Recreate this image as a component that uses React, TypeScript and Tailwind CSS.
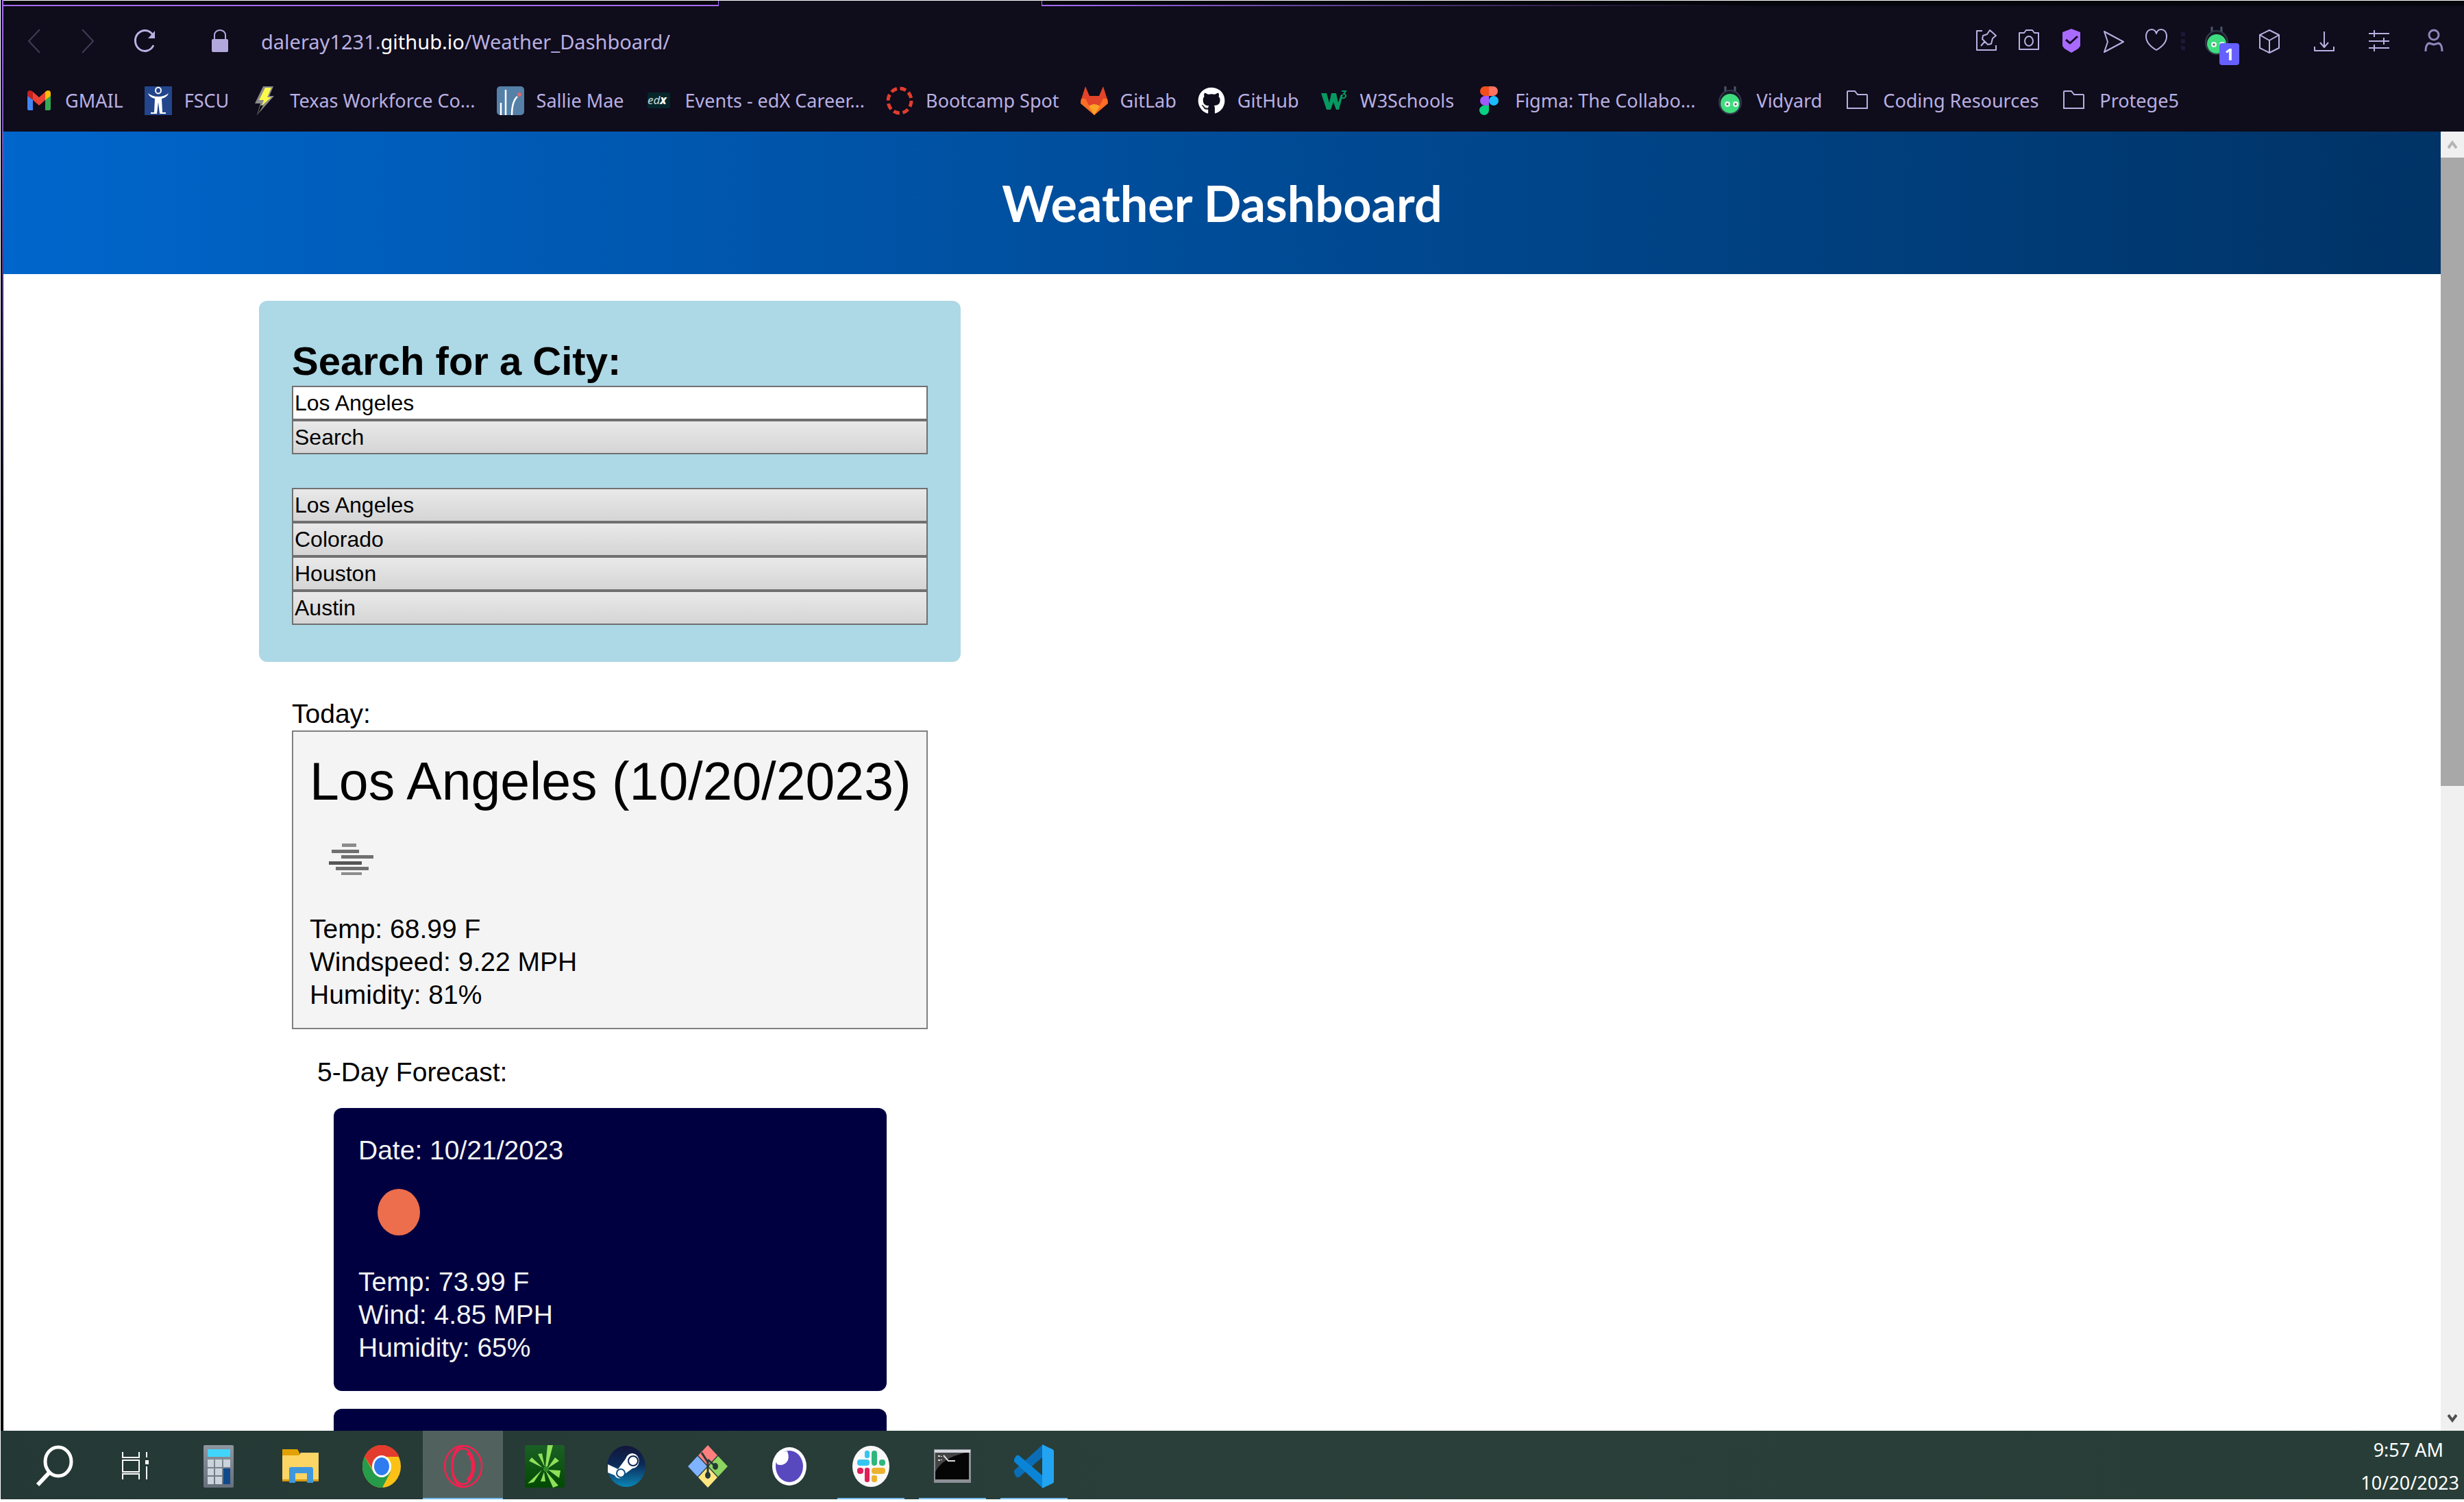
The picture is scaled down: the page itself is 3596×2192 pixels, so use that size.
import type { ReactNode } from "react";
import { FaGithub } from "react-icons/fa";

const UI_FONT = "font-['Noto_Sans','Open_Sans',sans-serif]";

/* ---------- toolbar icons ---------- */

function Line({ children }: { children: ReactNode }) {
  return (
    <svg viewBox="0 0 32 36" className="h-9 w-8 shrink-0" fill="none" stroke="#b9b0e2" strokeWidth="2" strokeLinejoin="round" aria-hidden="true">
      {children}
    </svg>
  );
}

const EditPin = () => (
  <Line>
    <path d="M10 3H2v28h28v-7" />
    <path d="M21 2l9 8-5 4 -2 8-5 1-8-8 1-5 6-2z M14 18l-6 7" />
  </Line>
);
const Camera = () => (
  <Line>
    <path d="M2 6h7l3-4h9l3 4h6v24H2z" />
    <ellipse cx="16" cy="18" rx="6" ry="7" />
  </Line>
);
const Shield = () => (
  <Line>
    <path d="M16 0l13 5v20l-3 4-10 6-10-6-3-4V5z" fill="#a96bff" stroke="none" />
    <path d="M8 16l6 5L25 11" stroke="#120b26" strokeWidth="3" />
  </Line>
);
const Send = () => (
  <Line>
    <path d="M2 4l28 15L2 34l5-15z" />
  </Line>
);
const Heart = () => (
  <Line>
    <path d="M16 31C9 27 1 20 1 11 1 4 5 1 9 1c4 0 6 2 7 6 1-4 3-6 7-6 4 0 8 3 8 10 0 9-8 16-15 20z" />
  </Line>
);
const Cube = () => (
  <Line>
    <path d="M16 2l14 7v19l-14 7-14-7V9z M2 9l14 8 14-8 M16 17v18" />
  </Line>
);
const Download = () => (
  <Line>
    <path d="M16 4v22 M10 20l6 7 6-7 M2 26v6h28v-6" />
  </Line>
);
const Sliders = () => (
  <Line>
    <path d="M1 7h30 M9 2v10 M1 18h30 M23 13v10 M1 28h30 M9 23v10" />
  </Line>
);
const Person = () => (
  <Line>
    <ellipse cx="16" cy="9" rx="7" ry="7" strokeWidth="3" stroke="#8f87ba" />
    <path d="M4 33c0-8 2-11 5-12l7 2 7-2c3 1 5 4 5 12" strokeWidth="3" stroke="#8f87ba" />
  </Line>
);
const Back = () => (
  <svg viewBox="0 0 20 36" className="h-9 w-5" fill="none" stroke="#413c58" strokeWidth="2" aria-hidden="true">
    <path d="M18 1L2 18l16 17" />
  </svg>
);
const Forward = () => (
  <svg viewBox="0 0 20 36" className="h-9 w-5" fill="none" stroke="#413c58" strokeWidth="2" aria-hidden="true">
    <path d="M2 1l16 17L2 35" />
  </svg>
);
const Reload = () => (
  <Line>
    <path d="M29 24A14 15 0 1 1 28 9" strokeWidth="3" />
    <path d="M31 3v11H21z" fill="#b9b0e2" stroke="none" />
  </Line>
);
const Lock = () => (
  <svg viewBox="0 0 24 34" className="h-[34px] w-6" aria-hidden="true">
    <rect y="14" width="24" height="19" rx="2" fill="#b3a8dc" />
    <path d="M4 15V8a8 7 0 0 1 16 0v7" fill="none" stroke="#b3a8dc" strokeWidth="2" />
  </svg>
);

function RobotFace() {
  return (
    <>
      <path d="M11 0v10 M25 0v10" stroke="#4a566b" strokeWidth="3" />
      <ellipse cx="18" cy="23" rx="16" ry="17" fill="#171826" stroke="#333a4c" strokeWidth="2" />
      <ellipse cx="18" cy="25" rx="14" ry="14" fill="#3fdc7f" />
      <circle cx="14" cy="26" r="4" fill="#e8f5ee" />
      <circle cx="26" cy="26" r="4" fill="#e8f5ee" />
      <circle cx="14" cy="26" r="1.5" fill="#555" />
      <circle cx="26" cy="26" r="1.5" fill="#555" />
    </>
  );
}
const Robot = () => (
  <svg viewBox="0 0 36 42" className="h-[42px] w-9" aria-hidden="true">
    <RobotFace />
  </svg>
);
const Dots = () => (
  <span className="flex w-1.5 flex-col gap-1" aria-hidden="true">
    <span className="h-1.5 bg-[#1e1838]" />
    <span className="h-1.5 bg-[#1e1838]" />
    <span className="h-1.5 bg-[#1e1838]" />
  </span>
);

/* ---------- bookmark icons ---------- */

function Fav({ children }: { children: ReactNode }) {
  return (
    <svg viewBox="0 0 40 42" className="h-[42px] w-10 shrink-0" aria-hidden="true">
      {children}
    </svg>
  );
}

const Gmail = () => (
  <Fav>
    <path d="M3 12h8v23H5q-2 0-2-2z" fill="#4285f4" />
    <path d="M29 12h8v21q0 2-2 2h-6z" fill="#34a853" />
    <path d="M3 14V10q0-4 4-4 2 0 4 2v12z" fill="#c5221f" />
    <path d="M29 8q2-2 4-2 4 0 4 4v4l-8 6z" fill="#fbbc04" />
    <path d="M11 8l9 8 9-8v12l-9 8-9-8z" fill="#ea4335" />
  </Fav>
);
const Fscu = () => (
  <Fav>
    <rect width="40" height="42" fill="#23458c" />
    <ellipse cx="20" cy="6" rx="4" ry="4.500" fill="none" stroke="#fff" strokeWidth="2" />
    <path d="M5 10q6 5 15 5t15-5q-2 6-10 8l1 20h5v2H22l-2-17-2 17H9v-2h5l1-20Q7 16 5 10z" fill="#fff" />
  </Fav>
);
const Bolt = () => (
  <Fav>
    <path d="M19 0h15l-6 14h7L10 42l5-17H7z" fill="#8b8b8b" />
    <path d="M22 2h9l-6 14h6L17 28l3-8h-7z" fill="#fbf94a" />
    <path d="M15 28l-4 13 8-13z" fill="#000" />
  </Fav>
);
const Sallie = () => (
  <Fav>
    <rect width="40" height="42" rx="5" fill="#5580a8" />
    <path d="M6 42V24 M13 42V5 M22 42q0-20 8-27" fill="none" stroke="#fff" strokeWidth="2.500" />
    <circle cx="33" cy="12" r="3" fill="#d9686c" />
  </Fav>
);
const Edx = () => (
  <Fav>
    <rect x="3" y="9" width="33" height="23" rx="2" fill="#04262a" />
    <text x="3" y="26" fontFamily="Noto Sans, sans-serif" fontSize="17" fontStyle="italic" fill="#c9d6d6">
      ed
      <tspan fontWeight="800" fill="#fff">x</tspan>
    </text>
  </Fav>
);
const Bootcamp = () => (
  <Fav>
    <ellipse cx="20" cy="21" rx="17" ry="18" fill="none" stroke="#e23d2e" strokeWidth="5" strokeDasharray="9 4.750" />
  </Fav>
);
const Gitlab = () => (
  <Fav>
    <path d="M7 0l6 14h14l6-14 7 22-20 20L0 22z" fill="#e24329" />
    <path d="M1 18h6l13 24L0 25z M39 18h-6L20 42l20-17z" fill="#fc6d26" />
    <path d="M12 29l8 13 8-13q-4-3-8-3t-8 3z" fill="#fca326" />
  </Fav>
);
const W3 = () => (
  <Fav>
    <path d="M1 10h8l4 14 3-14h7l3 14 4-12h3l-6 22h-4l-4-11-4 11H9z" fill="#069a60" />
    <path d="M31 7h6l-3 4q4 1 3 4-2 3-6 2" fill="none" stroke="#069a60" strokeWidth="2" />
  </Fav>
);
const Figma = () => (
  <Fav>
    <path d="M20 0h-6a7 7 0 0 0 0 14h6z" fill="#f24e1e" />
    <path d="M20 0h6a7 7 0 0 1 0 14h-6z" fill="#ff7262" />
    <path d="M20 14h-6a7 7 0 0 0 0 14h6z" fill="#a259ff" />
    <circle cx="27" cy="21" r="7" fill="#1abcfe" />
    <path d="M20 28h-6a7 7 0 1 0 6 7z" fill="#0acf83" />
  </Fav>
);
const Vidyard = () => (
  <Fav>
    <g transform="translate(2 0)">
      <RobotFace />
    </g>
  </Fav>
);
const Folder = () => (
  <Fav>
    <path d="M6 8q0-1 1-1h10l4 5h13q1 0 1 1v19H6z" fill="none" stroke="#b9b0e2" strokeWidth="2" />
  </Fav>
);
const Github = () => <FaGithub className="size-10 shrink-0 text-white" aria-hidden="true" />;

const bookmarks = [
  { label: "GMAIL", Icon: Gmail },
  { label: "FSCU", Icon: Fscu },
  { label: "Texas Workforce Co...", Icon: Bolt },
  { label: "Sallie Mae", Icon: Sallie },
  { label: "Events - edX Career...", Icon: Edx },
  { label: "Bootcamp Spot", Icon: Bootcamp },
  { label: "GitLab", Icon: Gitlab },
  { label: "GitHub", Icon: Github },
  { label: "W3Schools", Icon: W3 },
  { label: "Figma: The Collabo...", Icon: Figma },
  { label: "Vidyard", Icon: Vidyard },
  { label: "Coding Resources", Icon: Folder },
  { label: "Protege5", Icon: Folder },
];

/* ---------- taskbar icons ---------- */

function Tile({ children }: { children: ReactNode }) {
  return (
    <svg viewBox="0 0 58 64" className="h-16 w-[58px]" aria-hidden="true">
      {children}
    </svg>
  );
}

const SearchGlyph = () => (
  <Tile>
    <ellipse cx="34" cy="26" rx="19" ry="21" fill="none" stroke="#fff" strokeWidth="5" />
    <path d="M21 42L4 60" stroke="#fff" strokeWidth="6" />
  </Tile>
);
const TaskView = () => (
  <Tile>
    <path d="M8 11v8h24v-8 M8 51v-8h24v8 M8 23h24v17H8z M43 11v8 M43 32v19" fill="none" stroke="#fff" strokeWidth="2" />
    <rect x="41" y="23" width="5" height="6" fill="#fff" />
  </Tile>
);
const Calculator = () => (
  <Tile>
    <defs>
      <linearGradient id="calcBody" x1="0" y1="0" x2="0" y2="1">
        <stop offset="0" stopColor="#8f969f" />
        <stop offset="1" stopColor="#66707c" />
      </linearGradient>
    </defs>
    <rect x="7" y="1" width="44" height="62" rx="2" fill="url(#calcBody)" />
    <rect x="13" y="7" width="33" height="11" fill="#42d5fb" />
    <path d="M13 22h9v11h-9z M24 22h10v11H24z M36 22h10v11H36z M13 35h9v10h-9z M24 35h10v10H24z M13 47h9v11h-9z M24 47h10v11H24z" fill="#cbd3dd" />
    <rect x="36" y="35" width="10" height="23" fill="#114a8b" />
  </Tile>
);
const Explorer = () => (
  <Tile>
    <path d="M3 7h22l3 5v6H3z" fill="#e2a100" />
    <path d="M3 16h24l3-4h26v42H3z" fill="#fdd565" />
    <rect x="3" y="51" width="53" height="3" fill="#d79b10" />
    <path d="M13 56V36q0-3 3-3h29q3 0 3 3v20h-9V42H22v14z" fill="#3f97dc" />
  </Tile>
);
const Chrome = () => (
  <Tile>
    <ellipse cx="29" cy="32" rx="28" ry="31" fill="#fbc116" />
    <path d="M29 32L4 18A28 31 0 0 1 54 18H29z" fill="#e33b2e" />
    <path d="M4 18A28 31 0 0 0 30 63L42 40 29 32 17 40z" fill="#269b49" />
    <path d="M4 18C12 4 22 1 29 1s18 3 25 15H29L16 36z" fill="#e33b2e" />
    <ellipse cx="29" cy="32" rx="14" ry="16" fill="#fff" />
    <ellipse cx="29" cy="32" rx="11" ry="13" fill="#2f7cf1" />
  </Tile>
);
const Opera = () => (
  <Tile>
    <g fill="none" stroke="#f5204f" strokeWidth="2.500">
      <ellipse cx="29" cy="32" rx="27" ry="30" />
      <ellipse cx="29" cy="32" rx="16" ry="26" />
      <path d="M29 2c-11 2-16 14-16 30s5 28 16 30" strokeWidth="3" />
      <path d="M35 12c5 4 8 11 8 20s-3 16-8 20" strokeWidth="4" />
    </g>
  </Tile>
);
const Rays = () => (
  <Tile>
    <defs>
      <linearGradient id="rays" x1="0" y1="0" x2="0" y2="1">
        <stop offset="0" stopColor="#1b6025" />
        <stop offset="1" stopColor="#024a02" />
      </linearGradient>
    </defs>
    <rect x="0" y="1" width="58" height="62" rx="3" fill="url(#rays)" />
    <path d="M33 1h8L33 32h-3z M19 14l6-1 4 20z M44 19l6 5-17 11z M6 24l4-5 16 15z M52 38l-2 11-16-12z M30 38l19 22-8 3z M28 40l2 14h-7z M25 37L13 55l-9 2z" fill="#8fe05a" />
    <circle cx="31" cy="36" r="4" fill="#2f8a2b" />
  </Tile>
);
const Steam = () => (
  <Tile>
    <defs>
      <linearGradient id="steam" x1="0" y1="0" x2="0" y2="1">
        <stop offset="0" stopColor="#12163a" />
        <stop offset="0.450" stopColor="#0c2a57" />
        <stop offset="1" stopColor="#0b85b6" />
      </linearGradient>
    </defs>
    <ellipse cx="29" cy="32" rx="28" ry="30" fill="url(#steam)" />
    <path d="M2 29l15 7 11-15a10 11 0 1 1 10 14L27 43a8 8 0 0 1-15 2L2 41z" fill="#fff" />
    <ellipse cx="39" cy="24" rx="7" ry="7" fill="#fff" stroke="#0c2450" strokeWidth="2" />
    <ellipse cx="21" cy="42" rx="6" ry="6" fill="none" stroke="#0c4f80" strokeWidth="2" />
  </Tile>
);
const GitBash = () => (
  <Tile>
    <path d="M29 1l14 15-14 15-14-15z" fill="#ff7f7f" />
    <path d="M14 17l14 15-14 15L0 32z" fill="#80b3ff" />
    <path d="M44 17l14 15-14 15-14-15z" fill="#8ed460" />
    <path d="M29 33l14 15-14 15-14-15z" fill="#ffe680" />
    <path d="M20 12l9 14v18 M29 22l10 9" fill="none" stroke="#253a36" strokeWidth="3" />
    <ellipse cx="29" cy="45" rx="4" ry="5" fill="#253a36" />
    <ellipse cx="40" cy="32" rx="4" ry="5" fill="#253a36" />
  </Tile>
);
const Insomnia = () => (
  <Tile>
    <ellipse cx="29" cy="32" rx="25" ry="28" fill="#fff" />
    <ellipse cx="29" cy="32" rx="20" ry="23" fill="#5849be" />
    <path d="M8 20q4-10 18-10 4 10-1 16-6 6-14 3z" fill="#fff" />
  </Tile>
);
const Slack = () => (
  <Tile>
    <ellipse cx="29" cy="32" rx="27" ry="30" fill="#f8f8f8" />
    <rect x="20" y="9" width="7" height="11" rx="3" fill="#36c5f0" />
    <rect x="9" y="22" width="18" height="9" rx="4" fill="#36c5f0" />
    <rect x="30" y="9" width="8" height="22" rx="4" fill="#2eb67d" />
    <rect x="41" y="22" width="9" height="9" rx="4" fill="#2eb67d" />
    <rect x="9" y="34" width="9" height="9" rx="4" fill="#e01e5a" />
    <rect x="20" y="34" width="7" height="21" rx="3" fill="#e01e5a" />
    <rect x="30" y="34" width="20" height="9" rx="4" fill="#ecb22e" />
    <rect x="30" y="45" width="8" height="10" rx="3" fill="#ecb22e" />
  </Tile>
);
const Terminal = () => (
  <Tile>
    <rect x="2" y="7" width="54" height="49" fill="#8c9096" />
    <rect x="3" y="8" width="52" height="4" fill="#d5d8dd" />
    <rect x="4" y="12" width="49" height="39" fill="#050505" />
    <path d="M4 12h44Q14 20 4 40z" fill="#444" />
    <path d="M8 17h3 M8 23h3 M13 17v1 M13 22v1 M16 16l7 8h10" stroke="#ddd" strokeWidth="2" fill="none" />
  </Tile>
);
const VsCode = () => (
  <Tile>
    <path d="M41 1v18L7 48q-3 1-5-2l-2-5q-1-2 1-4z" fill="#0a6db6" />
    <path d="M41 63V45L7 16q-3-1-5 2l-2 4q-1 2 1 4z" fill="#0a84d6" />
    <path d="M41 0l15 7q2 1 2 3v44q0 2-2 3l-15 7z" fill="#22a4f2" />
  </Tile>
);

type Task = { label: string; Icon: () => ReactNode; state?: "active" | "running" };
const tasks: Task[] = [
  { label: "Task View", Icon: TaskView },
  { label: "Calculator", Icon: Calculator },
  { label: "File Explorer", Icon: Explorer },
  { label: "Chrome", Icon: Chrome },
  { label: "Opera", Icon: Opera, state: "active" },
  { label: "Optimizer", Icon: Rays },
  { label: "Steam", Icon: Steam },
  { label: "Git Bash", Icon: GitBash },
  { label: "Insomnia", Icon: Insomnia },
  { label: "Slack", Icon: Slack, state: "running" },
  { label: "Command Prompt", Icon: Terminal, state: "running" },
  { label: "Visual Studio Code", Icon: VsCode, state: "running" },
];

/* ---------- browser chrome ---------- */

function BrowserChrome() {
  return (
    <div className={`shrink-0 bg-[#0f0c1b] pb-2 text-[#b9b0e2] ${UI_FONT}`}>
      <div className="flex h-[9px] border-t border-white" aria-hidden="true">
        <div className="w-[1043px] border-b-2 border-[#a76bff] bg-[#04060b]" />
        <div className="w-[473px] border-x border-[#a76bff]" />
        <div className="flex flex-1 flex-col bg-[#04060b]">
          <div className="mt-auto h-0.5 bg-linear-to-r from-[#a76bff] to-[#0a0812] to-50%" />
        </div>
      </div>
      <nav className="flex h-[101px] items-center pr-7 pl-[35px]" aria-label="Browser toolbar">
        <button aria-label="Back"><Back /></button>
        <button aria-label="Forward" className="ml-[58px]"><Forward /></button>
        <button aria-label="Reload" className="ml-[57px]"><Reload /></button>
        <span className="w-[82px]" />
        <button aria-label="Site information"><Lock /></button>
        <a href="#top" className="ml-12 pt-0.5 text-[29px] whitespace-nowrap">
          daleray1231.<span className="text-white">github.io</span>/Weather_Dashboard/
        </a>
        <div className="ml-auto flex items-center">
          <div className="flex gap-[30px]">
            <button aria-label="Edit page"><EditPin /></button>
            <button aria-label="Snapshot"><Camera /></button>
            <button aria-label="Ad blocker"><Shield /></button>
            <button aria-label="Send page"><Send /></button>
            <button aria-label="Add to favourites"><Heart /></button>
          </div>
          <span className="mr-7 ml-5"><Dots /></span>
          <button aria-label="Vidyard extension" className="relative">
            <Robot />
            <span className="absolute top-6 left-[22px] flex h-8 w-[29px] items-center justify-center rounded-sm bg-[#6560ff] text-[24px] font-bold text-white">
              1
            </span>
          </button>
          <div className="ml-[43px] flex gap-12">
            <button aria-label="Extensions"><Cube /></button>
            <button aria-label="Downloads"><Download /></button>
            <button aria-label="Easy setup"><Sliders /></button>
            <button aria-label="Profile"><Person /></button>
          </div>
        </div>
      </nav>
      <nav className="flex h-[74px] items-center gap-[31px] pl-8 text-[27px] whitespace-nowrap" aria-label="Bookmarks">
        {bookmarks.map(({ label, Icon }) => (
          <a key={label} href="#top" className="flex items-center gap-[18px]">
            <Icon />
            {label}
          </a>
        ))}
      </nav>
    </div>
  );
}

/* ---------- page ---------- */

const FIELD = "block h-[50px] w-full border-2 border-[#707070] px-0.5 text-left text-[32px] leading-[44px] text-black";
const GREY = "bg-linear-to-b from-[#e9e9e9] to-[#d5d5d5]";

function SearchPanel() {
  return (
    <section className="rounded-xl bg-[#add8e6] px-12 pt-[52px] pb-[54px]">
      <form onSubmit={(e) => e.preventDefault()}>
        <label htmlFor="city" className="block text-[58px] leading-[72px] font-bold">
          Search for a City:
        </label>
        <input id="city" type="text" defaultValue="Los Angeles" className={`${FIELD} bg-white`} />
        <button type="submit" className={`${FIELD} ${GREY}`}>Search</button>
      </form>
      <div className="mt-[49px]">
        {["Los Angeles", "Colorado", "Houston", "Austin"].map((city) => (
          <button key={city} type="button" className={`${FIELD} ${GREY}`}>{city}</button>
        ))}
      </div>
    </section>
  );
}

function Mist() {
  return (
    <svg viewBox="0 0 120 144" className="block h-36 w-[120px]" role="img" aria-label="Mist">
      <g fill="#707070">
        <rect x="47" y="43" width="21" height="5" fill="#8c8c8c" />
        <rect x="32" y="52" width="40" height="5" />
        <rect x="46" y="60" width="47" height="5" />
        <rect x="28" y="69" width="48" height="5" fill="#555" />
        <rect x="38" y="77" width="48" height="5" />
        <rect x="46" y="85" width="30" height="4" fill="#8c8c8c" />
      </g>
    </svg>
  );
}

function Sun() {
  return (
    <svg viewBox="0 0 120 144" className="block h-36 w-[120px]" role="img" aria-label="Clear sky">
      <ellipse cx="59" cy="66" rx="31" ry="34" fill="#ec6e4c" />
    </svg>
  );
}

function ForecastCard({ date, temp, wind, humidity }: { date: string; temp: string; wind: string; humidity: string }) {
  return (
    <article className="rounded-xl bg-[#000041] px-9 pt-[38px] pb-[39px] text-[#f4f4f4]">
      <h4>Date: {date}</h4>
      <Sun />
      <p>Temp: {temp} F</p>
      <p>Wind: {wind} MPH</p>
      <p>Humidity: {humidity}%</p>
    </article>
  );
}

function Dashboard() {
  return (
    <main id="top" className="flex-1 overflow-hidden bg-white font-['Liberation_Sans',Arial,sans-serif] text-[39px] leading-[48px] text-black">
      <header className="flex h-52 items-center justify-center bg-linear-to-r from-[#0066cc] to-[#003366]">
        <h1 className="font-['Lato',sans-serif] text-[72px] leading-[86px] font-bold text-white">Weather Dashboard</h1>
      </header>
      <div className="mt-[39px] ml-[373px] w-[1024px] max-w-full">
        <SearchPanel />
        <section className="mt-[52px] px-12">
          <h2>Today:</h2>
          <div className="border-2 border-[#808080] bg-[#f4f4f4] py-6 pl-6">
            <h3 className="text-[77px] leading-[96px] whitespace-nowrap">Los Angeles (10/20/2023)</h3>
            <Mist />
            <p>Temp: 68.99 F</p>
            <p>Windspeed: 9.22 MPH</p>
            <p>Humidity: 81%</p>
          </div>
        </section>
        <section className="mt-[39px] pr-[108px] pl-[85px]">
          <h2>5-Day Forecast:</h2>
          <div className="mt-7 ml-6 flex flex-col gap-[26px]">
            <ForecastCard date="10/21/2023" temp="73.99" wind="4.85" humidity="65" />
            <div className="h-[413px] rounded-xl bg-[#000041]" />
          </div>
        </section>
      </div>
    </main>
  );
}

function ScrollBar() {
  return (
    <div className="flex w-[34px] shrink-0 flex-col items-center bg-[#f0f0f0]" aria-hidden="true">
      <div className="flex h-[38px] items-center">
        <svg viewBox="0 0 14 14" className="size-3.5" fill="none" stroke="#b4b4b4" strokeWidth="4">
          <path d="M1 12l6-8 6 8" />
        </svg>
      </div>
      <div className="h-[917px] w-full bg-[#a8a8a8]" />
      <div className="mt-auto flex h-9 items-center">
        <svg viewBox="0 0 14 14" className="size-3.5" fill="none" stroke="#505050" strokeWidth="4">
          <path d="M1 2l6 8 6-8" />
        </svg>
      </div>
    </div>
  );
}

function Taskbar() {
  return (
    <footer className={`ml-px flex h-[100px] shrink-0 items-center bg-linear-to-r from-[#243835] via-[#2a3f39] to-[#283d37] text-white ${UI_FONT}`}>
      <button aria-label="Search" className="ml-[50px] pr-8 pt-0.5"><SearchGlyph /></button>
      <div className="flex h-full gap-0.5">
        {tasks.map(({ label, Icon, state }) => (
          <button
            key={label}
            aria-label={label}
            className={`flex w-[117px] flex-col items-center justify-center ${state === "active" ? "bg-[#51625e]" : ""}`}
          >
            <span className="flex flex-1 items-center pt-1.5"><Icon /></span>
            <span className={`h-0.5 ${state === "active" ? "w-full bg-[#76b9ed]" : state === "running" ? "w-[98px] bg-[#76b9ed]" : "w-full"}`} />
          </button>
        ))}
      </div>
      <div className="mr-[7px] ml-auto flex flex-col items-center pt-1 text-[27px] leading-[48px]">
        <time className="self-end pr-[23px]">9:57 AM</time>
        <time>10/20/2023</time>
      </div>
    </footer>
  );
}

export default function App() {
  return (
    <div className="flex h-screen flex-col bg-white pb-1">
      <div className="flex min-h-0 flex-1">
        <div className="ml-px w-0.5 bg-[#04060b]" />
        <div className="w-0.5 bg-linear-to-b from-[#a76bff] to-[#04060b] to-40%" />
        <div className="flex min-w-0 flex-1 flex-col">
          <BrowserChrome />
          <div className="flex min-h-0 flex-1">
            <Dashboard />
            <ScrollBar />
          </div>
        </div>
      </div>
      <Taskbar />
    </div>
  );
}
